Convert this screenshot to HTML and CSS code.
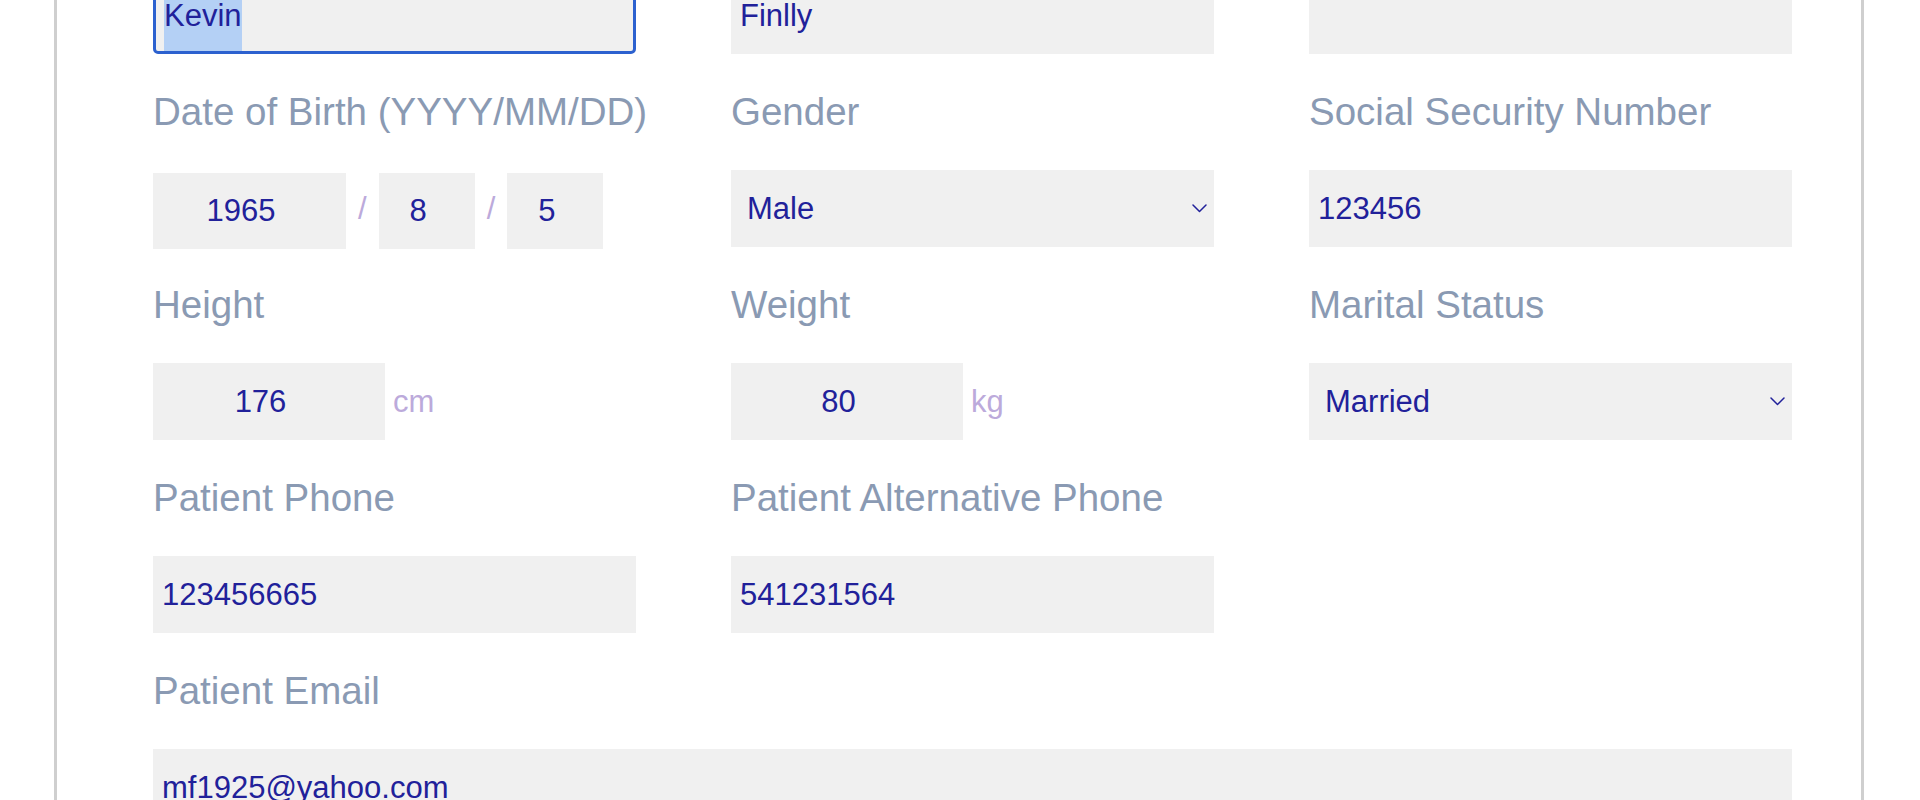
FILE: index.html
```html
<!DOCTYPE html>
<html lang="en">
<head>
<meta charset="utf-8">
<title>Patient Information</title>
<link rel="stylesheet" href="styles.css">
</head>
<body>
<div class="card">
  <form class="grid">
    <div class="field">
      <label class="label">First Name</label>
      <div class="input focused"><span class="sel">Kevin</span></div>
    </div>
    <div class="field">
      <label class="label">Last Name</label>
      <input class="input" type="text" value="Finlly">
    </div>
    <div class="field">
      <label class="label">Middle Name</label>
      <input class="input" type="text" value="">
    </div>

    <div class="field">
      <label class="label">Date of Birth (YYYY/MM/DD)</label>
      <div class="date-row">
        <input class="input num year" type="text" value="1965">
        <span class="slash">/</span>
        <input class="input num short" type="text" value="8">
        <span class="slash">/</span>
        <input class="input num short" type="text" value="5">
      </div>
    </div>
    <div class="field">
      <label class="label">Gender</label>
      <div class="select-wrap">
        <select class="input select"><option>Male</option><option>Female</option></select>
        <svg class="chev" width="15" height="9" viewBox="0 0 15 9"><path d="M1 1 L7.5 7.5 L14 1" fill="none" stroke="#21219a" stroke-width="1.5" stroke-linecap="round" stroke-linejoin="round"/></svg>
      </div>
    </div>
    <div class="field">
      <label class="label">Social Security Number</label>
      <input class="input" type="text" value="123456">
    </div>

    <div class="field">
      <label class="label">Height</label>
      <div class="unit-row">
        <input class="input num measure" type="text" value="176">
        <span class="unit">cm</span>
      </div>
    </div>
    <div class="field">
      <label class="label">Weight</label>
      <div class="unit-row">
        <input class="input num measure" type="text" value="80">
        <span class="unit">kg</span>
      </div>
    </div>
    <div class="field">
      <label class="label">Marital Status</label>
      <div class="select-wrap">
        <select class="input select"><option>Married</option><option>Single</option></select>
        <svg class="chev" width="15" height="9" viewBox="0 0 15 9"><path d="M1 1 L7.5 7.5 L14 1" fill="none" stroke="#21219a" stroke-width="1.5" stroke-linecap="round" stroke-linejoin="round"/></svg>
      </div>
    </div>

    <div class="field">
      <label class="label">Patient Phone</label>
      <input class="input" type="text" value="123456665">
    </div>
    <div class="field">
      <label class="label">Patient Alternative Phone</label>
      <input class="input" type="text" value="541231564">
    </div>
    <div class="field"></div>

    <div class="field wide">
      <label class="label">Patient Email</label>
      <input class="input" type="text" value="mf1925@yahoo.com">
    </div>
  </form>
</div>
</body>
</html>
```

FILE: styles.css
```css
* { box-sizing: border-box; }

html, body {
  margin: 0;
  padding: 0;
  background: #ffffff;
  overflow: hidden;
}

body {
  font-family: "Liberation Sans", Arial, Helvetica, sans-serif;
}

.card {
  width: 1810px;
  margin: -149px 0 0 54px;
  border: 3px solid #cfcfcf;
  padding: 43px 69px 60px 96px;
  background: #fff;
}

.grid {
  display: grid;
  grid-template-columns: repeat(3, 1fr);
  column-gap: 95px;
  row-gap: 36px;
  margin: 0;
}

.field {
  display: flex;
  flex-direction: column;
  min-width: 0;
}

.field.wide {
  grid-column: 1 / span 3;
}

.label {
  display: block;
  height: 44px;
  line-height: 44px;
  font-size: 38.5px;
  color: #8a9ab3;
  margin-bottom: 36px;
  white-space: nowrap;
}

.input {
  display: block;
  width: 100%;
  height: 77px;
  border: none;
  outline: none;
  border-radius: 0;
  background: #f0f0f0;
  color: #21219a;
  font-family: "Liberation Sans", Arial, Helvetica, sans-serif;
  font-size: 31px;
  padding: 0 9px;
  margin: 0;
}

.focused {
  border: 3px solid #2c61cf;
  border-radius: 5px;
  padding: 0 8px;
  white-space: nowrap;
  overflow: hidden;
}

.sel {
  display: inline-block;
  height: 100%;
  line-height: 71px;
  background: #b4d0f5;
  color: #21219a;
}

.date-row {
  display: flex;
  align-items: flex-start;
  height: 77px;
}

.num {
  text-align: center;
  padding: 0 28px 0 11px;
}

.date-row .input {
  height: 76px;
  margin-top: 3px;
}

.year { width: 193px; }
.short { width: 96px; }

.slash {
  font-size: 31px;
  color: #bcaadb;
  margin: 0 12px;
  align-self: center;
  line-height: 1;
}

.unit-row {
  display: flex;
  align-items: center;
}

.measure { width: 232px; }

.unit {
  font-size: 31px;
  color: #bcaadb;
  margin-left: 8px;
}

.select-wrap {
  position: relative;
}

.select {
  -webkit-appearance: none;
  appearance: none;
  padding: 0 40px 0 16px;
  cursor: pointer;
}

.chev {
  position: absolute;
  right: 7px;
  top: 34px;
  pointer-events: none;
}
```
